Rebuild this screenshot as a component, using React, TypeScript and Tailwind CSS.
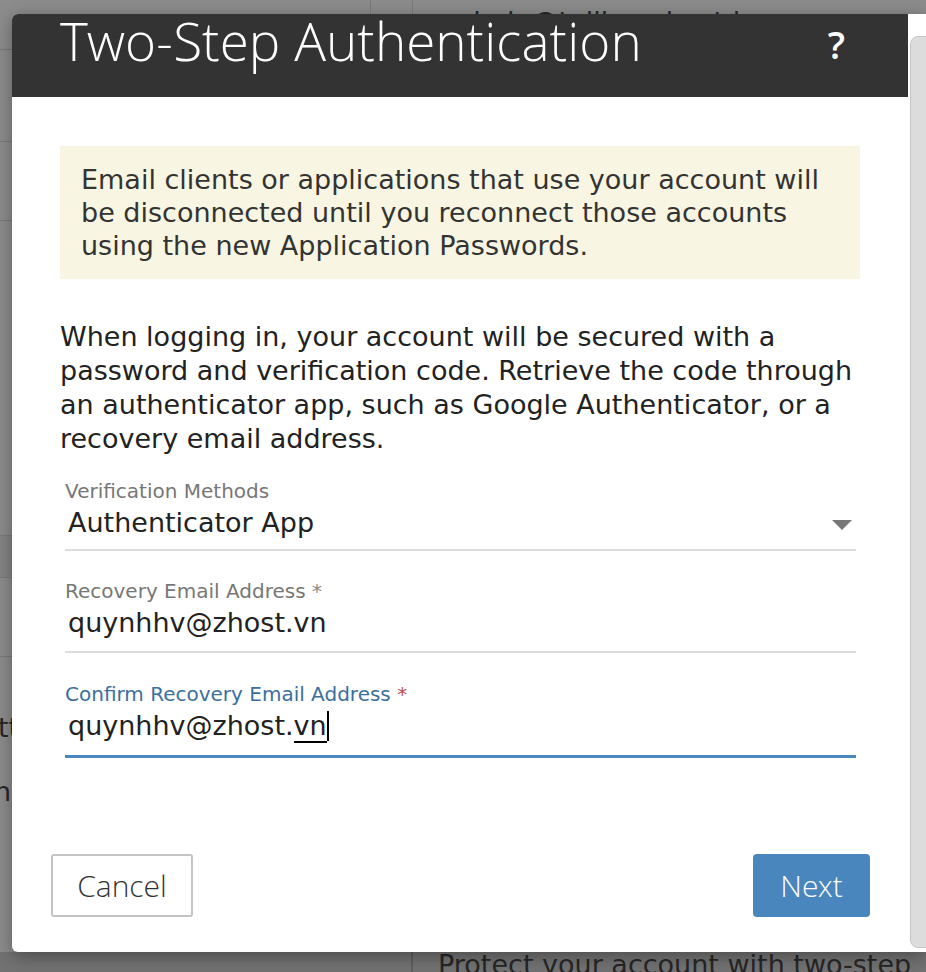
const body = "font-['DejaVu_Sans','Verdana',sans-serif]";
const head = "font-['Open_Sans_Light','Open_Sans',sans-serif] font-light";

function Backdrop() {
  return (
    <div className={`flex h-full flex-col ${body} text-[27px] leading-[34px] text-[#262626]`}>
      <div className="flex h-[50px] shrink-0 border-b border-[#777]">
        <div className="w-[371px] border-r border-[#7a7a7a]" />
        <div className="w-[42px] border-r border-[#7a7a7a]" />
        <div className="mt-[5px] whitespace-nowrap pl-[34px]">admin@tailieu-zhost.io.vn</div>
      </div>
      <div className="h-[92px] shrink-0 border-b border-[#7a7a7a]" />
      <div className="h-[79px] shrink-0 border-b border-[#7a7a7a]" />
      <div className="h-[315px] shrink-0 border-b border-[#7a7a7a]" />
      <div className="h-[42px] shrink-0 border-b border-[#7a7a7a] bg-[#858585]" />
      <div className="h-[79px] shrink-0 border-b border-[#7a7a7a]" />
      <div className="flex-1 pt-[54px]">
        <div className="-ml-[2px]">tt</div>
        <div className="mt-[30px] -ml-[6px]">n</div>
      </div>
      <div className="flex h-[20px] shrink-0 bg-[#727272]">
        <div className="w-[413px] border-r-2 border-[#5e5e5e]" />
        <div className="-mt-[4px] whitespace-nowrap pl-[25px]">Protect your account with two-step</div>
      </div>
    </div>
  );
}

function Field({
  label,
  value,
  star,
  active,
  select,
  className,
}: {
  label: string;
  value: string;
  star?: boolean;
  active?: boolean;
  select?: boolean;
  className: string;
}) {
  return (
    <div className={className}>
      <div className={`text-[20px] leading-[24px] ${active ? "text-[#3b6f9d]" : "text-[#777]"}`}>
        {label}
        {star && <span className={active ? "text-[#c0504d]" : "text-[#888]"}> *</span>}
      </div>
      <div className="mt-[3px] flex h-[34px] items-center justify-between pl-[3px] text-[27px] leading-[34px] text-[#222]">
        {active ? (
          <span className="whitespace-nowrap">
            {value.slice(0, -2)}
            <span className="border-b-2 border-black">{value.slice(-2)}</span>
            <span className="inline-block h-[30px] w-[2px] bg-black align-[-6px]" />
          </span>
        ) : (
          <span className="whitespace-nowrap">{value}</span>
        )}
        {select && (
          <svg width="20" height="10" viewBox="0 0 20 10" className="mr-[4px] mt-[4px]">
            <polygon points="0,0 20,0 10,10" fill="#777" />
          </svg>
        )}
      </div>
    </div>
  );
}

function Modal() {
  return (
    <div className="absolute left-[12px] top-[14px] flex h-[938px] w-[914px] overflow-hidden rounded-l-[6px] bg-white shadow-[0_4px_18px_rgba(0,0,0,0.35)]">
      <div className={`flex w-[896px] flex-col ${body}`}>
        <div className="flex h-[83px] shrink-0 items-start justify-between bg-[#333] pl-[48px] pr-[63px] text-white">
          <h1 className={`${head} whitespace-nowrap pt-[1px] text-[53px] leading-[52px]`}>Two-Step Authentication</h1>
          <span className="pt-[10px] font-['Open_Sans',sans-serif] text-[38px] font-semibold leading-[40px]">?</span>
        </div>

        <div className="px-[48px]">
          <div className="mt-[49px] h-[133px] whitespace-nowrap bg-[#f8f6e2] pl-[21px] pt-[17px] text-[27px] leading-[33px] text-[#333]">
            Email clients or applications that use your account will
            <br />
            be disconnected until you reconnect those accounts
            <br />
            using the new Application Passwords.
          </div>

          <p className="mt-[41px] whitespace-nowrap text-[27px] leading-[34px] text-[#222]">
            When logging in, your account will be secured with a
            <br />
            password and verification code. Retrieve the code through
            <br />
            an authenticator app, such as Google Authenticator, or a
            <br />
            recovery email address.
          </p>

          <div className="pl-[5px] pr-[4px]">
            <Field className="mt-[23px]" label="Verification Methods" value="Authenticator App" select />
            <div className="mt-[9px] h-[2px] bg-[#dddddd]" />
            <Field className="mt-[28px]" label="Recovery Email Address" value="quynhhv@zhost.vn" star />
            <div className="mt-[11px] h-[2px] bg-[#dddddd]" />
            <Field className="mt-[29px]" label="Confirm Recovery Email Address" value="quynhhv@zhost.vn" star active />
            <div className="mt-[12px] h-[3px] bg-[#4a86c0]" />
          </div>
        </div>

        <div className={`mt-[96px] flex justify-between pl-[39px] pr-[38px] ${head}`}>
          <button className="h-[63px] w-[142px] rounded-[3px] border-2 border-[#c4c4c4] bg-white text-[30px] text-[#333]">
            Cancel
          </button>
          <button className="h-[63px] w-[117px] rounded-[4px] bg-[#4a86be] text-[30px] text-white">Next</button>
        </div>
      </div>

      <div className="w-[18px] shrink-0 bg-white pl-[2px] pt-[22px]">
        <div className="h-[912px] w-[24px] rounded-[8px] border border-[#c6c6c6] bg-[#dcdcdc]" />
      </div>
    </div>
  );
}

export default function App() {
  return (
    <div className="relative h-[972px] w-[926px] overflow-hidden bg-[#8c8c8c]">
      <Backdrop />
      <Modal />
    </div>
  );
}
